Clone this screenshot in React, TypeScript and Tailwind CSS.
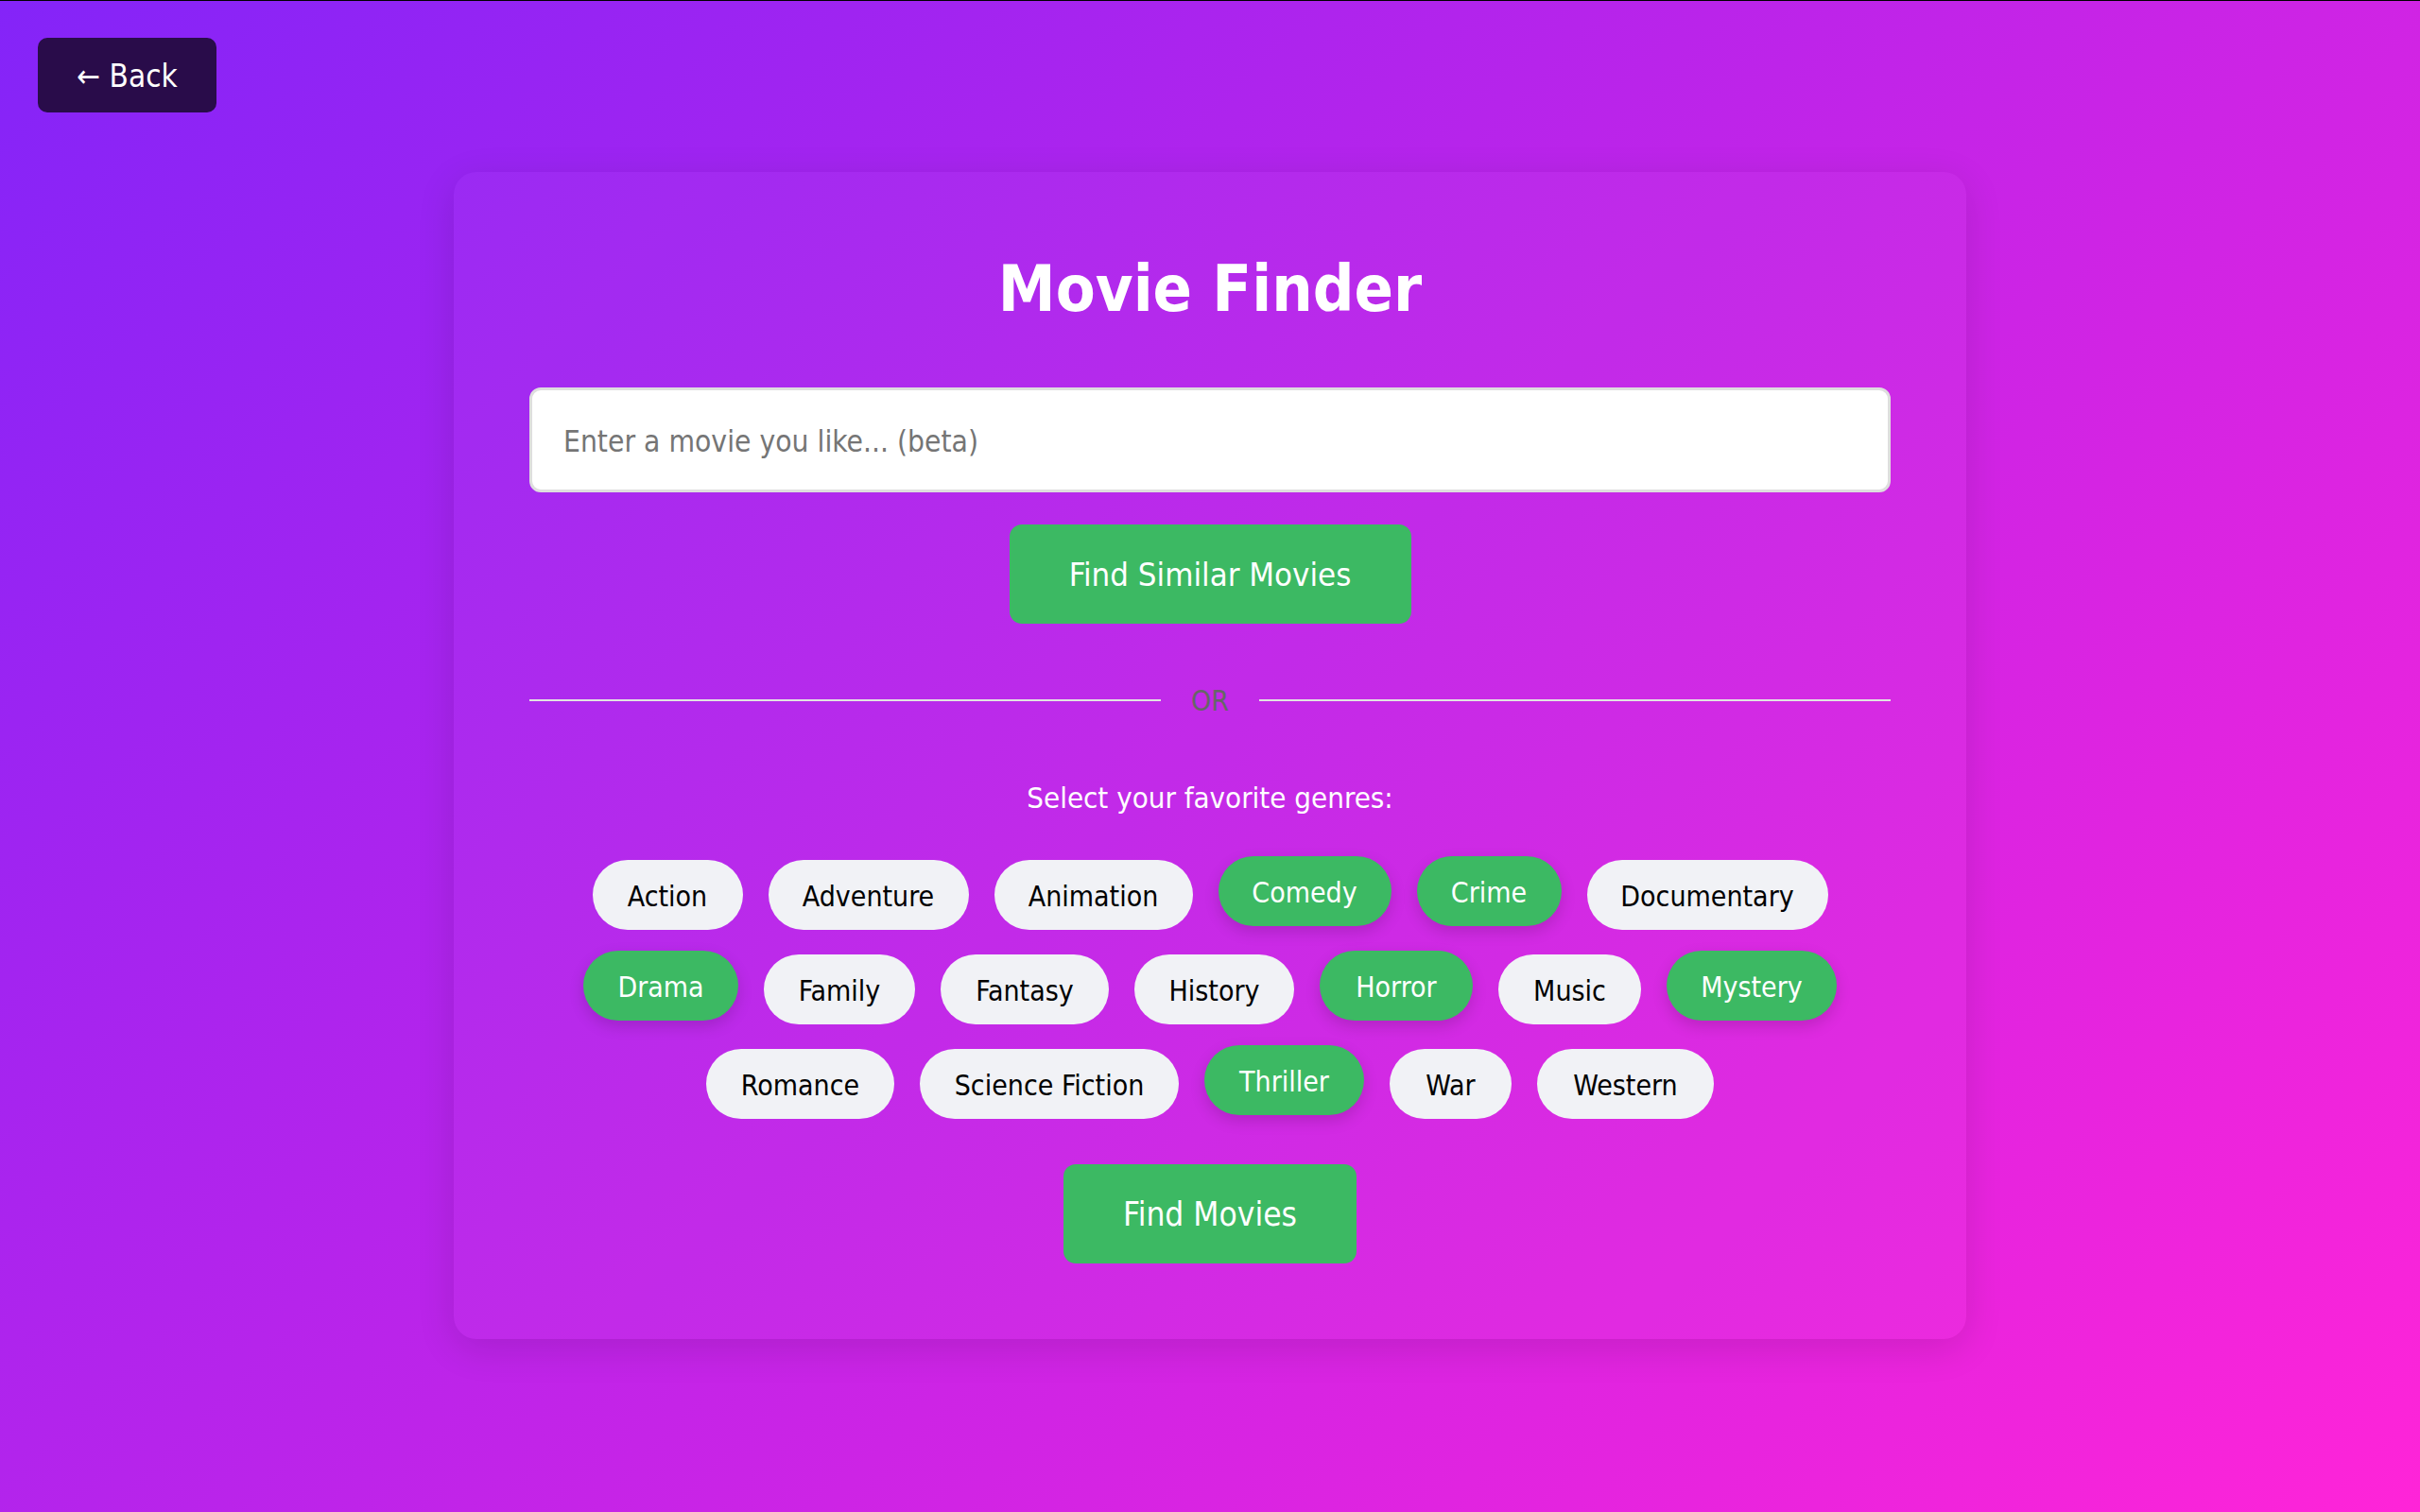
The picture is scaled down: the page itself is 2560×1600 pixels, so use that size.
import { useState } from "react";

interface Genre {
  name: string;
  w: string;
}

const rows: Genre[] = [
  { name: "Action", w: "w-[159px]" },
  { name: "Adventure", w: "w-[212px]" },
  { name: "Animation", w: "w-[210px]" },
  { name: "Comedy", w: "w-[183px]" },
  { name: "Crime", w: "w-[153px]" },
  { name: "Documentary", w: "w-[255px]" },
  { name: "Drama", w: "w-[164px]" },
  { name: "Family", w: "w-[160px]" },
  { name: "Fantasy", w: "w-[178px]" },
  { name: "History", w: "w-[169px]" },
  { name: "Horror", w: "w-[162px]" },
  { name: "Music", w: "w-[151px]" },
  { name: "Mystery", w: "w-[180px]" },
  { name: "Romance", w: "w-[199px]" },
  { name: "Science Fiction", w: "w-[274px]" },
  { name: "Thriller", w: "w-[169px]" },
  { name: "War", w: "w-[129px]" },
  { name: "Western", w: "w-[187px]" },
];

const initialSelected = ["Comedy", "Crime", "Drama", "Horror", "Mystery", "Thriller"];

export default function App() {
  const [selected, setSelected] = useState<string[]>(initialSelected);
  const [query, setQuery] = useState("");

  const toggle = (name: string) => {
    setSelected((s) => (s.includes(name) ? s.filter((g) => g !== name) : [...s, name]));
  };

  return (
    <div className="min-h-screen w-full border-t border-black bg-[linear-gradient(135deg,#8424f8,#ff24d8)] px-[40px] pt-[39px] pb-[40px] font-['DejaVu_Sans_Condensed','Liberation_Sans',sans-serif]">
      <button className="flex h-[79px] w-[189px] items-center justify-center rounded-[10px] bg-[#290c4a] pt-[2px] text-[33px] text-white">
        ← Back
      </button>

      <div className="mx-auto mt-[63px] w-[1600px] rounded-[24px] bg-white/[0.03] px-[80px] py-[80px] shadow-[0_10px_40px_rgba(0,0,0,0.12)]">
        <h1 className="text-center text-[68px] leading-[88px] font-bold text-white">Movie Finder</h1>

        <input
          value={query}
          onChange={(e) => setQuery(e.target.value)}
          placeholder="Enter a movie you like... (beta)"
          className="mt-[60px] block h-[111px] w-full rounded-[12px] border-[3px] border-[#dedede] bg-white px-[33px] pt-[2px] text-[31.5px] text-black outline-none placeholder:text-[#757575]"
        />

        <button className="mx-auto mt-[34px] block h-[105px] w-[425px] rounded-[13px] bg-[#3cb963] pt-[2px] text-[34.5px] text-white">
          Find Similar Movies
        </button>

        <div className="mt-[61px] flex h-[40px] items-center gap-[32px]">
          <div className="h-[2px] flex-1 bg-[#e2e2e2]" />
          <span className="text-[30px] text-[#666666]">OR</span>
          <div className="h-[2px] flex-1 bg-[#e2e2e2]" />
        </div>

        <p className="mt-[63px] text-center text-[31px] leading-[40px] text-white">
          Select your favorite genres:
        </p>

        <div className="mt-[46px] flex flex-wrap justify-center gap-x-[27px] gap-y-[26px]">
          {rows.map((g) => {
            const on = selected.includes(g.name);
            return (
              <button
                key={g.name}
                onClick={() => toggle(g.name)}
                className={`${g.w} flex h-[74px] items-center justify-center rounded-full pt-[2px] text-[30px] ${
                  on
                    ? "-translate-y-[4px] bg-[#3cb963] text-white shadow-[0_6px_16px_rgba(0,0,0,0.15)]"
                    : "bg-[#f1f2f6] text-black"
                }`}
              >
                {g.name}
              </button>
            );
          })}
        </div>

        <button className="mx-auto mt-[48px] block h-[105px] w-[310px] rounded-[13px] bg-[#3cb963] pt-[2px] text-[35px] text-white">
          Find Movies
        </button>
      </div>
    </div>
  );
}
